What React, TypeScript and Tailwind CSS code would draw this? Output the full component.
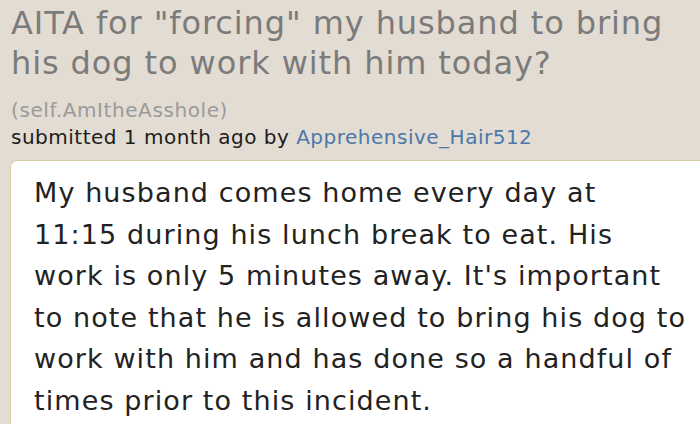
const lines = [
  'My husband comes home every day at',
  '11:15 during his lunch break to eat. His',
  "work is only 5 minutes away. It's important",
  'to note that he is allowed to bring his dog to',
  'work with him and has done so a handful of',
  'times prior to this incident.',
];

export default function App() {
  return (
    <div className="w-[700px] h-[424px] overflow-hidden bg-[#e3dcd3] [font-family:'DejaVu_Sans',sans-serif]">
      <div className="pl-[11px] pt-[3px]">
        <h1 className="text-[32px] leading-[40px] tracking-[0.9px] text-[#7b7b7b] font-normal">
          AITA for "forcing" my husband to bring his dog to work with him today?
        </h1>
        <div className="mt-[15px] text-[20px] leading-[24px] tracking-[0.6px] text-[#9a9a9a]">(self.AmItheAsshole)</div>
        <div className="mt-[3px] text-[20px] leading-[24px] tracking-[0.5px] text-[#1c1c1c]">
          submitted 1 month ago by <span className="text-[#4a78a8]">Apprehensive_Hair512</span>
        </div>
      </div>
      <div className="ml-[10px] mt-[11px] bg-white border border-[#d9cfa6] border-r-0 rounded-tl-[7px] pl-[23px] pt-[11px] pb-4">
        <p className="text-[27px] leading-[41.6px] tracking-[1.1px] text-[#222222] whitespace-nowrap">
          {lines.map((l) => (
            <span key={l} className="block">{l}</span>
          ))}
        </p>
      </div>
    </div>
  );
}
